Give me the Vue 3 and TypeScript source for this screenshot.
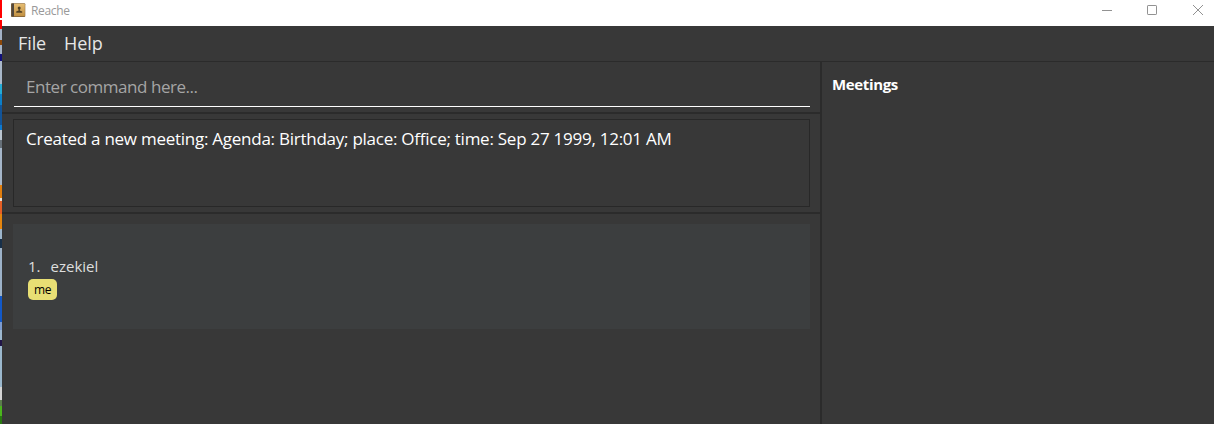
<script setup lang="ts">
interface Person {
  index: number
  name: string
  tags: string[]
}

const menus: string[] = ['File', 'Help']
const result = 'Created a new meeting: Agenda: Birthday; place: Office; time: Sep 27 1999, 12:01 AM'
const people: Person[] = [{ index: 1, name: 'ezekiel', tags: ['me'] }]
</script>

<template>
  <div class="screen">
    <div class="desktop-edge"></div>
    <div class="window">
      <header class="titlebar">
        <svg class="app-icon" width="15" height="15" viewBox="0 0 15 15">
          <defs>
            <linearGradient id="cover" x1="0" y1="0" x2="0" y2="1">
              <stop offset="0" stop-color="#e6bd72" />
              <stop offset="1" stop-color="#c29143" />
            </linearGradient>
          </defs>
          <rect x="0" y="0.3" width="14.3" height="13.7" rx="1" fill="#8d6a3a" />
          <rect x="3" y="0.8" width="10.8" height="12.2" fill="url(#cover)" />
          <rect x="0.5" y="0.5" width="2.5" height="13" fill="#51473d" />
          <circle cx="8.2" cy="4.9" r="1.5" fill="#514125" />
          <path d="M7.6 5.5h1.2v2l2.4 1v1.2H5.2V8.5l2.4-1z" fill="#514125" />
        </svg>
        <span class="title">Reache</span>
        <div class="controls">
          <svg width="10" height="10" viewBox="0 0 10 10"><path d="M0 5.5h10" /></svg>
          <svg width="10" height="10" viewBox="0 0 10 10"><rect x=".5" y=".5" width="9" height="9" rx=".6" /></svg>
          <svg width="10" height="10" viewBox="0 0 10 10"><path d="M0 0l10 10M10 0L0 10" /></svg>
        </div>
      </header>
      <nav class="menubar">
        <span v-for="menu in menus" :key="menu">{{ menu }}</span>
      </nav>
      <div class="body">
        <main class="main">
          <section class="command"><div class="field">Enter command here...</div></section>
          <section class="result"><div class="output">{{ result }}</div></section>
          <section class="list">
            <article v-for="p in people" :key="p.index" class="card">
              <div class="name"><span class="index">{{ p.index }}.</span><span>{{ p.name }}</span></div>
              <div class="tags"><span v-for="t in p.tags" :key="t" class="tag">{{ t }}</span></div>
            </article>
          </section>
        </main>
        <aside class="meetings">Meetings</aside>
      </div>
    </div>
  </div>
</template>

<style>
body {
  margin: 0;
  overflow: hidden;
}
</style>

<style scoped>
.screen {
  display: flex;
  width: 1214px;
  height: 424px;
  overflow: hidden;
  background: #383838;
  font-family: "Open Sans", "Noto Sans", sans-serif;
  white-space: nowrap;
}
.desktop-edge {
  flex: 0 0 2px;
  background: linear-gradient(
    to bottom,
    #f00 0 18px, #fff 18px 20px, #f00 20px 29px, #a3b2c6 29px 40px,
    #8c4708 40px 45px, #a3b2c6 45px 54px, #10107c 54px 61px, #a9b8c9 61px 84px,
    #25abd6 84px 94px, #0c7fc8 94px 105px, #125499 105px 125px, #0d7ad0 125px 130px,
    #b9c4cf 130px 140px, #667079 140px 148px, #a5b6c9 148px 185px, #e17e0e 185px 198px,
    #e9ded3 198px 201px, #e65f25 201px 214px, #e5850e 214px 229px, #9db5cb 229px 239px,
    #18304a 239px 248px, #9db2c8 248px 296px, #1258c7 296px 322px, #7c9bd0 322px 330px,
    #9db8cf 330px 340px, #211547 340px 346px, #9bb8cd 346px 387px, #d4d4d4 387px 400px,
    #5b7c4c 400px 406px, #4bb51d 406px 416px, #287a10 416px
  );
}
.window {
  display: flex;
  flex-direction: column;
  flex: 1;
}
.titlebar {
  display: flex;
  align-items: flex-start;
  height: 26px;
  background: #fff;
}
.app-icon {
  margin: 3px 0 0 9px;
}
.title {
  margin-left: 5px;
  color: #999;
  font-size: 12px;
  letter-spacing: -0.35px;
  line-height: 22px;
}
.controls {
  display: flex;
  gap: 35px;
  margin: 5px 11px 0 auto;
}
.controls svg {
  fill: none;
  stroke: #929292;
  stroke-width: 1;
}
.controls svg:last-child {
  margin-left: 1px;
}
.menubar {
  display: flex;
  gap: 18px;
  height: 35px;
  padding-left: 16px;
  border-bottom: 1px solid #2b2b2b;
  color: #e6e6e6;
  font-size: 18px;
  letter-spacing: -0.1px;
  line-height: 35px;
}
.body {
  display: flex;
  flex: 1;
}
.main {
  display: flex;
  flex-direction: column;
  width: 818px;
  border-right: 2px solid #2b2b2b;
}
.command {
  height: 50px;
  padding: 0 10px 0 12px;
  border-bottom: 2px solid #2b2b2b;
}
.field {
  height: 44px;
  padding-left: 12px;
  border-bottom: 1px solid #fff;
  color: #a5a5a5;
  font-size: 17px;
  letter-spacing: -0.46px;
  line-height: 50px;
}
.result {
  height: 93px;
  padding: 5px 10px 0 11px;
  border-bottom: 2px solid #2b2b2b;
}
.output {
  box-sizing: border-box;
  height: 88px;
  padding-left: 12px;
  border: 1px solid #282828;
  color: #fff;
  font-size: 17px;
  letter-spacing: -0.255px;
  line-height: 38px;
}
.list {
  flex: 1;
  padding: 10px 10px 0 11px;
}
.card {
  box-sizing: border-box;
  height: 105px;
  padding: 32px 15px 0;
  background: #3c3e3f;
  color: #dedede;
}
.name {
  display: flex;
  gap: 10px;
  height: 23px;
  font-size: 15px;
  line-height: 20px;
}
.tags {
  display: flex;
}
.tag {
  height: 21px;
  padding: 0 6px;
  border-radius: 5px;
  background: #e8df74;
  color: #000;
  font-size: 12px;
  letter-spacing: -0.4px;
  line-height: 22px;
}
.meetings {
  padding: 12px 0 0 10px;
  color: #fff;
  font-size: 15px;
  font-weight: 700;
  letter-spacing: -0.35px;
  line-height: 21px;
}
</style>
